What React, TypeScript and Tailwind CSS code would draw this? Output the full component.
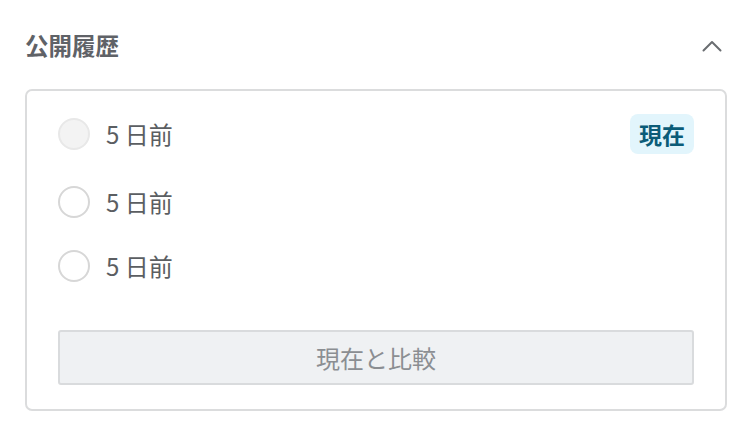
import { useState } from "react";

type Release = { id: number; label: string; current: boolean };

const releases: Release[] = [
  { id: 1, label: "5 日前", current: true },
  { id: 2, label: "5 日前", current: false },
  { id: 3, label: "5 日前", current: false },
];

function ChevronUp() {
  return (
    <svg width="20" height="12" viewBox="0 0 20 12" fill="none" className="mr-[5px]">
      <polyline points="1.5,10.5 10,2 18.5,10.5" stroke="#6a6d71" strokeWidth="2" strokeLinecap="round" strokeLinejoin="round" />
    </svg>
  );
}

function App() {
  const [selected, setSelected] = useState<number | null>(null);

  return (
    <div
      className="w-[752px] h-[436px] bg-white px-[25px] pt-[28px]"
      style={{ fontFamily: '"Noto Sans CJK JP", "Noto Sans", sans-serif' }}
    >
      <div className="h-[36px] flex items-center justify-between">
        <h2 className="text-[23.5px] font-bold text-[#5f6267] leading-none">公開履歴</h2>
        <ChevronUp />
      </div>

      <div className="mt-[25px] border-2 border-[#dbdcdd] rounded-[7px] px-[31px] pt-[23px] pb-[24px]">
        <div className="flex flex-col gap-[32px]">
          {releases.map(r => (
            <label
              key={r.id}
              className={`flex items-center justify-between ${r.current ? "h-[40px]" : "h-[32px]"}`}
            >
              <div className="flex items-center gap-[16px]">
                <span
                  onClick={() => !r.current && setSelected(r.id)}
                  className={
                    r.current
                      ? "w-[32px] h-[32px] rounded-full border-2 border-[#e8e8e8] bg-[#f3f3f3]"
                      : selected === r.id
                        ? "w-[32px] h-[32px] rounded-full border-[9px] border-[#0b5c78] bg-white"
                        : "w-[32px] h-[32px] rounded-full border-2 border-[#d7d7d7] bg-white"
                  }
                />
                <span className="text-[24px] text-[#5b5e62] leading-none">{r.label}</span>
              </div>
              {r.current && (
                <span className="h-[40px] px-[9px] flex items-center rounded-[8px] bg-[#e2f5fc] text-[#0b5c78] text-[23px] font-bold leading-none">
                  現在
                </span>
              )}
            </label>
          ))}
        </div>

        <button
          disabled={selected === null}
          className="mt-[48px] w-full h-[55px] border-2 border-[#d9dbdd] rounded-[3px] bg-[#eff1f3] text-[24px] text-[#8b8e92] flex items-center justify-center"
        >
          現在と比較
        </button>
      </div>
    </div>
  );
}

export default App;
